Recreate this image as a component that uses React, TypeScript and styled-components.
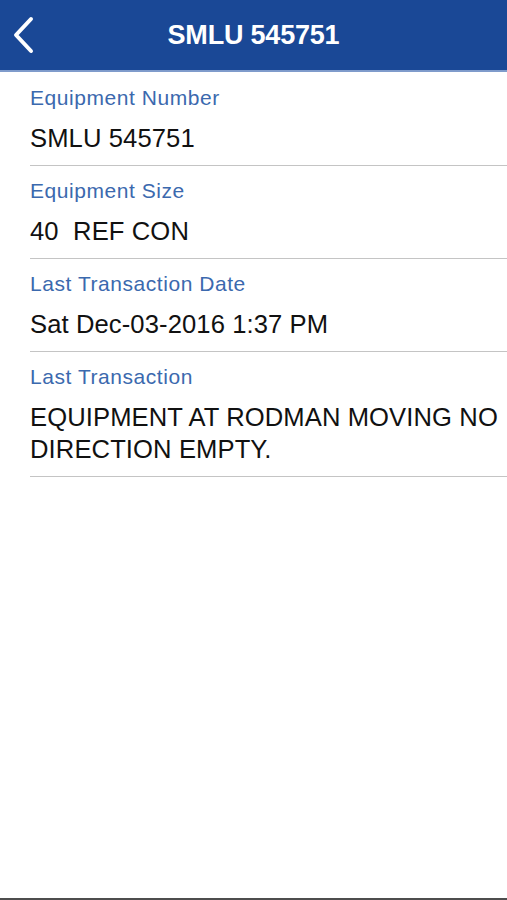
import React from "react";
import styled, { createGlobalStyle } from "styled-components";

const Global = createGlobalStyle`
  html, body { margin: 0; padding: 0; background: #ffffff; }
  body { font-family: "Liberation Sans", Arial, sans-serif; }
  * { box-sizing: border-box; }
`;

const Screen = styled.div`
  display: flex;
  flex-direction: column;
  width: 507px;
  height: 900px;
  background: #ffffff;
  border-bottom: 2px solid #4d4d4d;
`;

const NavBar = styled.header`
  position: relative;
  display: flex;
  align-items: center;
  justify-content: center;
  height: 72px;
  background: #1a4896;
  border-bottom: 2px solid #7f9bcb;
`;

const BackButton = styled.button`
  position: absolute;
  left: 8px;
  top: 14px;
  width: 34px;
  height: 42px;
  padding: 0;
  border: 0;
  background: transparent;
  display: flex;
  align-items: center;
  justify-content: center;
`;

const Title = styled.h1`
  margin: 0;
  color: #ffffff;
  font-family: "Liberation Sans", Arial, sans-serif;
  font-size: 27px;
  font-weight: 700;
  letter-spacing: -0.2px;
`;

const List = styled.div`
  display: flex;
  flex-direction: column;
  flex: 1;
  padding-top: 1px;
`;

const Row = styled.div`
  display: flex;
  flex-direction: column;
  margin-left: 30px;
  padding: 13px 0 11px 0;
  border-bottom: 1px solid #c4c4c4;
`;

const Label = styled.div`
  color: #3b69ae;
  font-size: 21px;
  line-height: 24px;
  letter-spacing: 0.55px;
  margin-bottom: 12px;
`;

const Value = styled.div`
  color: #111111;
  font-size: 25.6px;
  line-height: 32px;
  letter-spacing: 0.1px;
`;

const ChevronLeft = () => (
  <svg width="34" height="42" viewBox="0 0 34 42" fill="none">
    <path
      d="M23 5 L8 21 L23 37"
      stroke="#ffffff"
      strokeWidth="4"
      strokeLinecap="round"
      strokeLinejoin="round"
    />
  </svg>
);

const rows = [
  { label: "Equipment Number", value: "SMLU 545751" },
  { label: "Equipment Size", value: "40\u00a0 REF CON" },
  { label: "Last Transaction Date", value: "Sat Dec-03-2016 1:37 PM" },
  { label: "Last Transaction", value: "EQUIPMENT AT RODMAN MOVING NO DIRECTION EMPTY." },
];

export default function App() {
  return (
    <>
      <Global />
      <Screen>
        <NavBar>
          <BackButton aria-label="Back">
            <ChevronLeft />
          </BackButton>
          <Title>SMLU 545751</Title>
        </NavBar>
        <List>
          {rows.map((r) => (
            <Row key={r.label}>
              <Label>{r.label}</Label>
              <Value>{r.value}</Value>
            </Row>
          ))}
        </List>
      </Screen>
    </>
  );
}
